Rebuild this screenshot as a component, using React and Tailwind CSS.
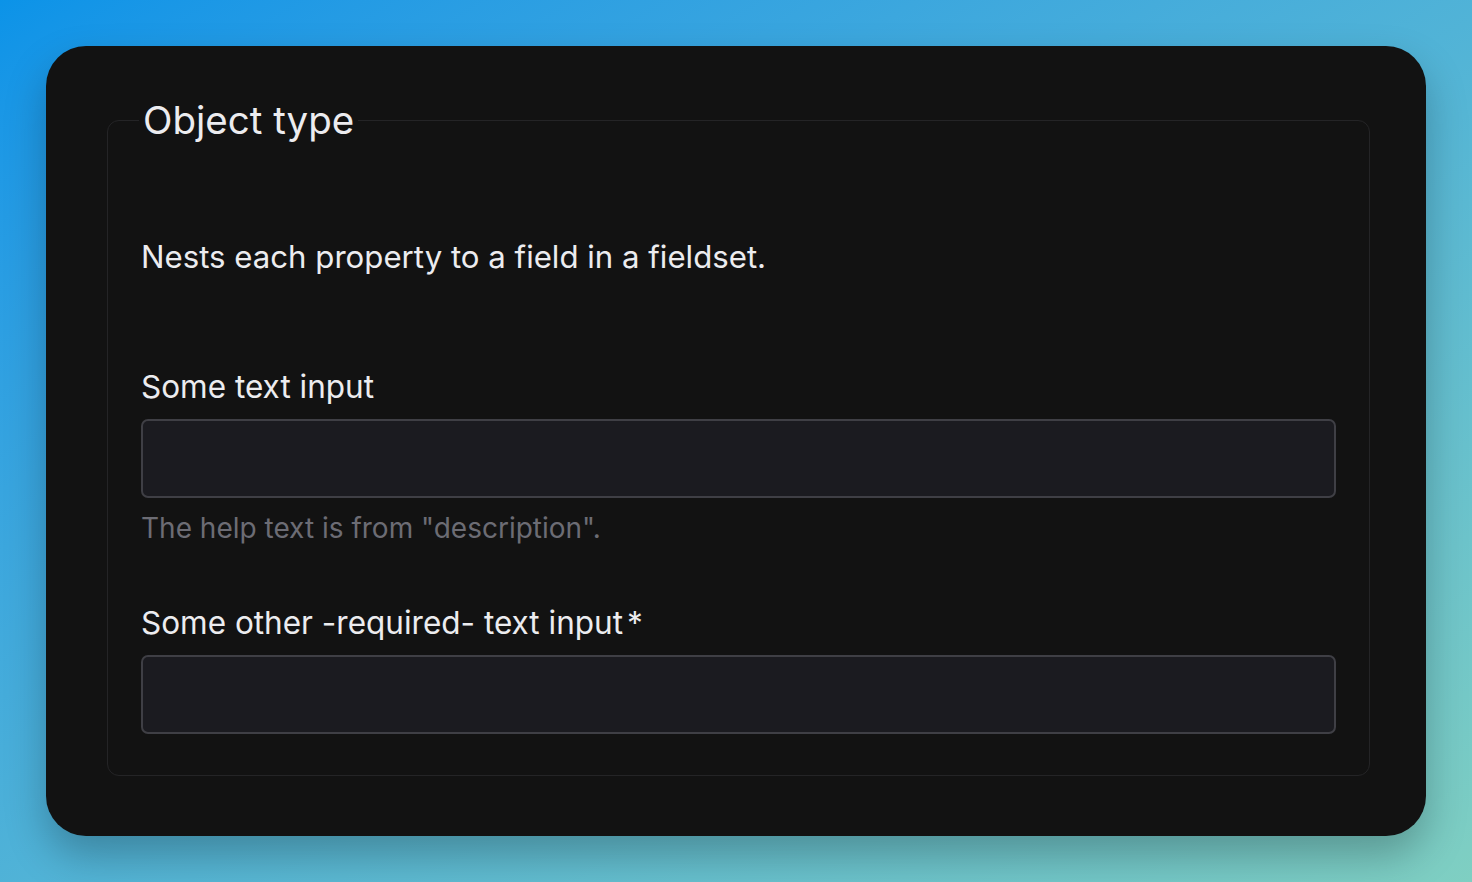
export default function App() {
  return (
    <div
      className="w-[1472px] h-[882px] p-[46px] bg-gradient-to-br from-[#0b93e8] to-[#7fcfc2]"
      style={{ fontFamily: "Inter, 'Noto Sans', sans-serif" }}
    >
      <div className="h-[790px] rounded-[40px] bg-[#121212] shadow-[0_20px_40px_rgba(0,0,0,0.25)] pl-[61px] pr-[56px] pt-[50px]">
        <fieldset className="border border-[#242426] rounded-[12px] px-[33px] pb-[41px]">
          <legend className="-ml-[2px] px-[4px] text-[38.5px] leading-[48px] text-[#ececef]">Object type</legend>
          <p className="mt-[93px] text-[31.2px] leading-[40px] text-[#ececef]">
            Nests each property to a field in a fieldset.
          </p>

          <div className="mt-[90px]">
            <label className="block text-[31.5px] leading-[40px] text-[#ececef]">Some text input</label>
            <input
              type="text"
              className="mt-[12px] block w-full h-[79px] rounded-[7px] border-2 border-[#3f3f45] bg-[#1b1b20] outline-none"
            />
            <p className="mt-[12px] text-[28px] leading-[36px] text-[#6c6c74]">
              The help text is from "description".
            </p>
          </div>

          <div className="mt-[57px]">
            <label className="block text-[31.5px] leading-[40px] text-[#ececef]">
              Some other -required- text input
              <span className="ml-[4px]">*</span>
            </label>
            <input
              type="text"
              required
              className="mt-[12px] block w-full h-[79px] rounded-[7px] border-2 border-[#3f3f45] bg-[#1b1b20] outline-none"
            />
          </div>
        </fieldset>
      </div>
    </div>
  );
}
